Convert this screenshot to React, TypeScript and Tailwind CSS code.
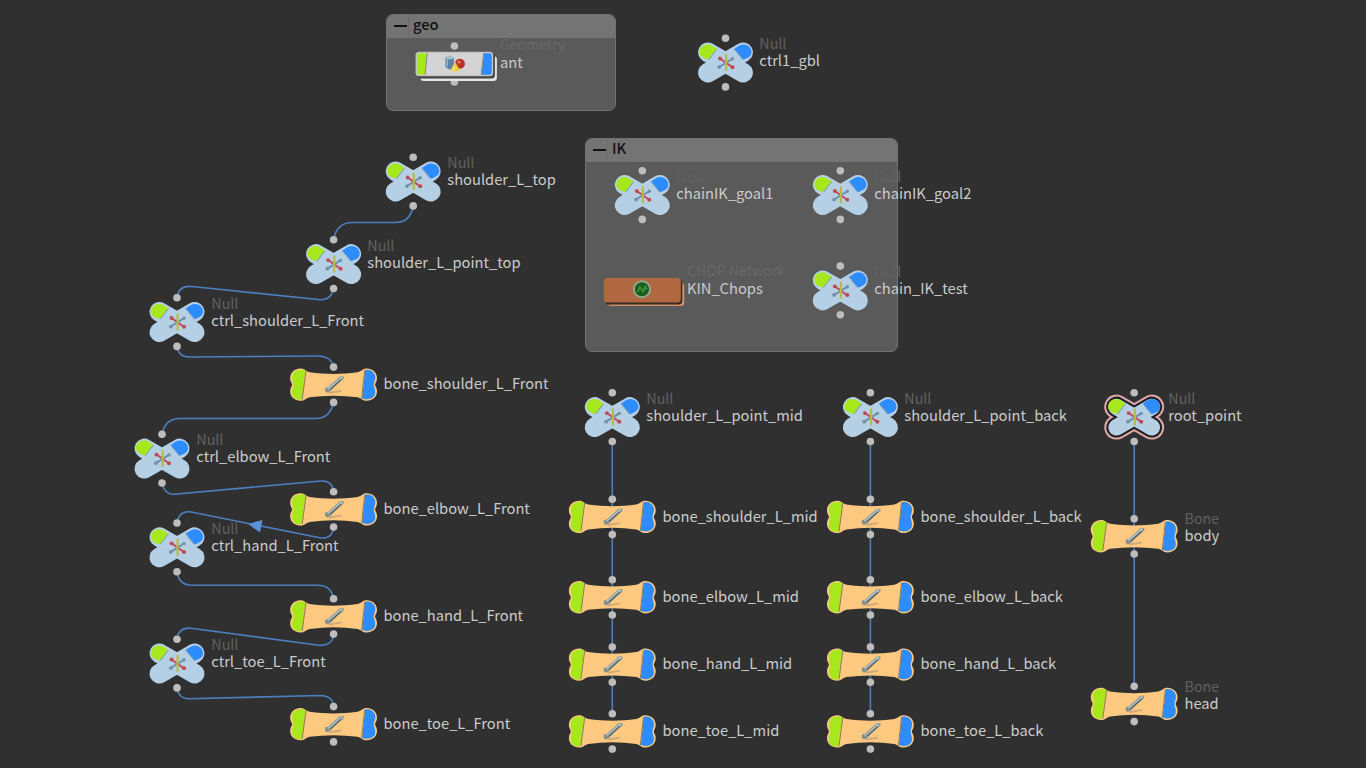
import React from "react";

type NodeData = { x: number; y: number; name: string; kind?: string; selected?: boolean };

const nulls: NodeData[] = [
  { x: 725.5, y: 62.5, name: "ctrl1_gbl" },
  { x: 413.2, y: 181.5, name: "shoulder_L_top" },
  { x: 333.6, y: 264.1, name: "shoulder_L_point_top" },
  { x: 177, y: 322, name: "ctrl_shoulder_L_Front" },
  { x: 162, y: 458.6, name: "ctrl_elbow_L_Front" },
  { x: 177, y: 547.3, name: "ctrl_hand_L_Front" },
  { x: 177, y: 663.5, name: "ctrl_toe_L_Front" },
  { x: 642.3, y: 195, name: "chainIK_goal1" },
  { x: 840.3, y: 195, name: "chainIK_goal2" },
  { x: 840.3, y: 290.4, name: "chain_IK_test" },
  { x: 612.3, y: 417.1, name: "shoulder_L_point_mid" },
  { x: 870.4, y: 417.1, name: "shoulder_L_point_back" },
  { x: 1134.2, y: 417.1, name: "root_point", selected: true },
];

const bones: NodeData[] = [
  { x: 333.6, y: 384.8, name: "bone_shoulder_L_Front" },
  { x: 333.6, y: 509.5, name: "bone_elbow_L_Front" },
  { x: 333.6, y: 616.5, name: "bone_hand_L_Front" },
  { x: 333.6, y: 724.3, name: "bone_toe_L_Front" },
  { x: 612.3, y: 517, name: "bone_shoulder_L_mid" },
  { x: 612.3, y: 597.4, name: "bone_elbow_L_mid" },
  { x: 612.3, y: 664.7, name: "bone_hand_L_mid" },
  { x: 612.3, y: 731.5, name: "bone_toe_L_mid" },
  { x: 870.4, y: 517, name: "bone_shoulder_L_back" },
  { x: 870.4, y: 597.4, name: "bone_elbow_L_back" },
  { x: 870.4, y: 664.7, name: "bone_hand_L_back" },
  { x: 870.4, y: 731.5, name: "bone_toe_L_back" },
  { x: 1134.2, y: 536.4, name: "body", kind: "Bone" },
  { x: 1134.2, y: 704, name: "head", kind: "Bone" },
];

const wires = [
  "M413.2 206 C411 217 405 222.5 396 222.5 H352 C342 222.5 335 229 333.6 240",
  "M333.6 288.6 C332 296 328 301 318 299.5 L192 286.5 C183 285.5 178 289 177 297.6",
  "M177 346.4 C178 353 182 357 189 357 L318 356 C327 356 332 360 333.6 367",
  "M333.6 402.5 C331 413 326 418.5 316 418.5 H180 C170 418.5 164 424 162 434.3",
  "M162 483 C163 489 167 494.5 174 494.3 L321 481 C329 480.5 333 485 333.6 491.8",
  "M333.6 527.2 C333 534 329 538.5 321 538 L190 511.8 C182 511 178 516 177 523",
  "M177 571.7 C178 580 183 585.3 192 585.3 H318 C327 585.3 332 590 333.6 599",
  "M333.6 634.2 C333 642 328 646 319 645.3 L191 628.2 C183 627.5 178 631 177 639",
  "M177 688 C178 695 182 698.8 189 698.8 L320 695.5 C328 695.5 333 699 333.6 706.6",
  "M612.3 441.4 V714",
  "M870.4 441.4 V714",
  "M1134.2 441.4 V686.3",
];

const BONE_PATH =
  "M-33 -16.3 C-29 -16.3 -28 -13.5 -24 -12.6 C-8 -10.3 8 -10.3 24 -12.6 C28 -13.5 29 -16.3 33 -16.3 C40 -16.3 44.5 -11 43.2 -4.5 C42.8 -2.5 41.5 -1.5 41.5 0 C41.5 1.5 42.8 2.5 43.2 4.5 C44.5 11 40 16 33 16 C29 16 28 13.3 24 12.4 C8 10.3 -8 10.3 -24 12.4 C-28 13.3 -29 16 -33 16 C-40 16 -44.5 11 -43.2 4.5 C-42.8 2.5 -41.5 1.5 -41.5 0 C-41.5 -1.5 -42.8 -2.5 -43.2 -4.5 C-44.5 -11 -40 -16.3 -33 -16.3 Z";

const ARMS = "M-17.7 -10.2 L17.7 10.2 M17.7 -10.2 L-17.7 10.2";

function Dot({ y }: { y: number }) {
  return <circle cx="0" cy={y} r="3.8" fill="#bdbdbd" />;
}

function Label({ name, kind, className, faint }: { name: string; kind?: string; className: string; faint?: boolean }) {
  return (
    <div className={`absolute flex flex-col whitespace-nowrap text-[14.7px] leading-[17px] ${className}`}>
      <span className={faint ? "h-[17px] text-[14.1px] text-[#686868]" : "h-[17px] text-[14.3px] text-[#616161]"}>{kind}</span>
      <span className="text-[#cbcbcb]">{name}</span>
    </div>
  );
}

function NullNode({ node }: { node: NodeData }) {
  const left = Math.floor(node.x);
  const top = Math.floor(node.y);
  return (
    <div className="absolute size-0" style={{ left, top }}>
      <svg className="absolute -left-10 -top-10" width="80" height="80" viewBox={`${left - node.x - 40} ${top - node.y - 40} 80 80`}>
        {node.selected && (
          <>
            <path d={ARMS} stroke="#dfa9aa" strokeWidth="24.5" strokeLinecap="round" />
            <path d={ARMS} stroke="#1f1f22" strokeWidth="20.5" strokeLinecap="round" />
          </>
        )}
        <path d={ARMS} stroke="#b5cfe4" strokeWidth={node.selected ? 16.5 : 19.6} strokeLinecap="round" />
        <path d="M-8.8 -13.7 L-14 -17 C-19 -20 -26 -16.5 -26 -10.5 C-26 -6.5 -23 -4.6 -17 -3 Z" fill="#a6e81c" />
        <path d="M8.8 -13.7 L14 -17 C19 -20 26 -16.5 26 -10.5 C26 -6.5 23 -4.6 17.5 -3 Z" fill="#2d8cff" />
        <path d="M-8.6 -13.5 L-16.8 -2.8 M8.6 -13.5 L17.4 -2.8" stroke="#7798ae" strokeWidth="1" />
        <path d="M-5.8 -4.3 L7.2 5" stroke="#c4484f" strokeWidth="1.9" />
        <path d="M7.4 -4 L-6.6 4.8" stroke="#6d8ea4" strokeWidth="1.9" />
        <path d="M.6 -8.5 V8.3" stroke="#b8ba45" strokeWidth="2.2" />
        <circle cx="-5.5" cy="-4" r="1.9" fill="#bf4953" />
        <circle cx="7" cy="4.7" r="2" fill="#bf4953" />
        <circle cx="7" cy="-3.7" r="1.7" fill="#7292a7" />
        <circle cx="-6.2" cy="4.6" r="1.9" fill="#7292a7" />
        <Dot y={-24.3} />
        <Dot y={24.4} />
      </svg>
      <Label name={node.name} kind="Null" className="left-[34.3px] -top-[28px]" />
    </div>
  );
}

function BoneNode({ node }: { node: NodeData }) {
  const left = Math.floor(node.x);
  const top = Math.floor(node.y);
  return (
    <div className="absolute size-0" style={{ left, top }}>
      <svg className="absolute -left-[50px] -top-[25px]" width="100" height="50" viewBox={`${left - node.x - 50} ${top - node.y - 25} 100 50`}>
        <path d={BONE_PATH} fill="#fdc981" />
        <path d="M-28 -14 C-31 -15.8 -38 -15.5 -40.5 -11.5 C-43 -7 -40.2 -3 -40.2 0 C-40.2 3 -43 7 -40.8 11 C-39 14.5 -35 15.5 -31.8 14.5 Z" fill="#a6e81c" />
        <path d="M31.5 -14.7 C35 -15.5 39 -14.5 41 -10.5 C43 -6 40.2 -3 40.2 0 C40.2 3 43 7 40.8 11 C38.5 15 31.5 15 28.5 13.6 Z" fill="#2d8cff" />
        <path d="M-27.6 -14 L-31.4 14.5 M31.1 -14.5 L28.1 13.6" stroke="#8d7a58" strokeWidth="1" />
        <path d="M-4 8 L7 6.2" stroke="#cfa877" strokeWidth="1.8" strokeLinecap="round" />
        <path d="M-8.5 3 L-5.5 2.5 L-3.5 .5 L4.5 -6.5 L5.5 -8 L10 -8.5 L10 -5.5 L7 -4 L-1.5 4 L-2.5 6 L-6.5 8 L-8.5 6.5 Z" fill="#82908f" />
        <path d="M-3 4.5 L7.5 -5" stroke="#59666c" strokeWidth="1.5" />
        <path d="M-6 4 L-3 2 L7 -6.8" stroke="#b4c2c4" strokeWidth="1.5" fill="none" />
        <circle cx="7.6" cy="-6.8" r="1.3" fill="#b4c2c4" />
        <Dot y={-17.7} />
        <Dot y={17.6} />
      </svg>
      <Label name={node.name} kind={node.kind} className="left-[50.5px] -top-[27px]" />
    </div>
  );
}

function Panel({ title, className }: { title: string; className: string }) {
  return (
    <section className={`absolute overflow-hidden rounded-[7px] border border-[#717171] bg-[#5a5a5a] ${className}`}>
      <header className="flex h-[23px] items-center bg-[#747474] text-[14.7px] font-medium leading-none text-[#111]">
        <span className="mb-[2px] ml-[7px] h-[2px] w-[13px] bg-[#111]" />
        <span className="ml-[1px] h-full w-px bg-[#6c6c6c]" />
        <span className="mb-[5px] ml-1">{title}</span>
      </header>
    </section>
  );
}

export default function App() {
  return (
    <main className="relative h-[768px] w-[1366px] overflow-hidden bg-[#303030] font-['Noto_Sans_CJK_SC','Noto_Sans',sans-serif]">
      <Panel title="geo" className="left-[386px] top-[14px] h-[97px] w-[230px]" />
      <Panel title="IK" className="left-[585px] top-[138px] h-[214px] w-[313px]" />

      <svg className="absolute inset-0" width="1366" height="768" fill="none">
        {wires.map((d) => (
          <path key={d} d={d} stroke="#4c7fbd" strokeWidth="1.6" />
        ))}
        <path d="M248 524 L262.5 520 L260 532.5 Z" fill="#5a91d8" />
      </svg>

      <div className="absolute left-[454px] top-[64px] size-0">
        <svg className="absolute -left-[50px] -top-[25px]" width="100" height="50" viewBox="-50.4 -25 100 50">
          <Dot y={-18} />
          <Dot y={18} />
          <rect x="-34" y="-8" width="76.5" height="25" rx="3.5" fill="#e3e3e3" />
          <rect x="-37" y="-11" width="77.5" height="25.5" rx="3.5" fill="#424242" />
          <rect x="-38.8" y="-12.3" width="77.6" height="24.5" rx="3.5" fill="#c4c4c4" />
          <rect x="-37.3" y="-10.8" width="75" height="21.5" rx="2.5" fill="#d4d4d4" />
          <path d="M-35 -10.8 H-27.5 L-29.5 10.7 H-35 Q-37.3 10.7 -37.3 8 V-8 Q-37.3 -10.8 -35 -10.8" fill="#a6e81c" />
          <path d="M29.5 -10.8 H35 Q37.4 -10.8 37.4 -8 V8 Q37.4 10.7 35 10.7 H27 Z" fill="#2d8cff" />
          <path d="M-27.2 -10.8 L-29.2 10.7 M29.2 -10.8 L26.8 10.7" stroke="#858585" />
          <path d="M-9 -7 V2.5 Q-7 5.5 -3.5 5.5 L-.5 1 V-6 Z" fill="#5b83a3" />
          <ellipse cx="-4.8" cy="-6.6" rx="4.2" ry="1.8" fill="#a8bfd0" />
          <path d="M-7.2 -4.5 V2.5" stroke="#9cb8cc" strokeWidth="1.5" />
          <circle cx="5.5" cy="-.3" r="5" fill="#b83226" />
          <circle cx="4.6" cy="-2" r="1.6" fill="#e0806c" />
          <path d="M.8 -2 L5.5 6 Q.8 9 -4 6 Z" fill="#ecc843" />
          <path d="M.5 0 L-2 6 L.5 6.8 Z" fill="#fae98a" />
        </svg>
        <Label name="ant" kind="Geometry" faint className="left-[46px] -top-[28px]" />
      </div>

      <div className="absolute left-[642px] top-[290px] size-0">
        <svg className="absolute -left-[50px] -top-[25px]" width="100" height="50" viewBox="-50.8 -25.5 100 50">
          <rect x="-35" y="-7.5" width="76.5" height="23" rx="3.5" fill="#d18f6b" />
          <rect x="-37.5" y="-11" width="77" height="25" rx="3.5" fill="#392a22" />
          <rect x="-39" y="-12.5" width="77" height="24.5" rx="3.5" fill="#b06841" />
          <circle cx="-.8" cy="-1.3" r="9" fill="#91a88b" />
          <circle cx="-.8" cy="-1.3" r="7" fill="#195c22" />
          <path d="M-5 1.5 L-3 -3.5 L.5 1 L2.5 -4 L4 -1" stroke="#409336" strokeWidth="1.8" fill="none" />
        </svg>
        <Label name="KIN_Chops" kind="CHOP Network" faint className="left-[45px] -top-[28px]" />
      </div>

      {nulls.map((node) => (
        <NullNode key={node.name} node={node} />
      ))}
      {bones.map((node) => (
        <BoneNode key={node.name} node={node} />
      ))}
    </main>
  );
}
